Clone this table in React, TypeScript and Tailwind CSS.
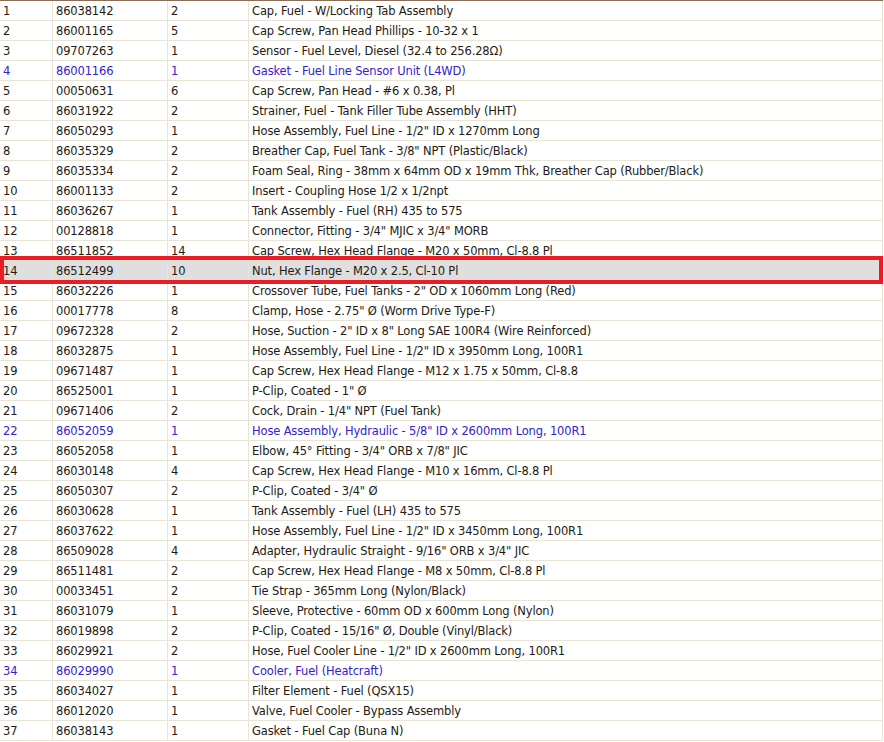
import React from "react";

type Row = [string, string, string, string, boolean?];

const rows: Row[] = [
  ["1", "86038142", "2", "Cap, Fuel - W/Locking Tab Assembly"],
  ["2", "86001165", "5", "Cap Screw, Pan Head Phillips - 10-32 x 1"],
  ["3", "09707263", "1", "Sensor - Fuel Level, Diesel (32.4 to 256.28Ω)"],
  ["4", "86001166", "1", "Gasket - Fuel Line Sensor Unit (L4WD)", true],
  ["5", "00050631", "6", "Cap Screw, Pan Head - #6 x 0.38, Pl"],
  ["6", "86031922", "2", "Strainer, Fuel - Tank Filler Tube Assembly (HHT)"],
  ["7", "86050293", "1", "Hose Assembly, Fuel Line - 1/2\" ID x 1270mm Long"],
  ["8", "86035329", "2", "Breather Cap, Fuel Tank - 3/8\" NPT (Plastic/Black)"],
  ["9", "86035334", "2", "Foam Seal, Ring - 38mm x 64mm OD x 19mm Thk, Breather Cap (Rubber/Black)"],
  ["10", "86001133", "2", "Insert - Coupling Hose 1/2 x 1/2npt"],
  ["11", "86036267", "1", "Tank Assembly - Fuel (RH) 435 to 575"],
  ["12", "00128818", "1", "Connector, Fitting - 3/4\" MJIC x 3/4\" MORB"],
  ["13", "86511852", "14", "Cap Screw, Hex Head Flange - M20 x 50mm, Cl-8.8 Pl"],
  ["14", "86512499", "10", "Nut, Hex Flange - M20 x 2.5, Cl-10 Pl"],
  ["15", "86032226", "1", "Crossover Tube, Fuel Tanks - 2\" OD x 1060mm Long (Red)"],
  ["16", "00017778", "8", "Clamp, Hose - 2.75\" Ø (Worm Drive Type-F)"],
  ["17", "09672328", "2", "Hose, Suction - 2\" ID x 8\" Long SAE 100R4 (Wire Reinforced)"],
  ["18", "86032875", "1", "Hose Assembly, Fuel Line - 1/2\" ID x 3950mm Long, 100R1"],
  ["19", "09671487", "1", "Cap Screw, Hex Head Flange - M12 x 1.75 x 50mm, Cl-8.8"],
  ["20", "86525001", "1", "P-Clip, Coated - 1\" Ø"],
  ["21", "09671406", "2", "Cock, Drain - 1/4\" NPT (Fuel Tank)"],
  ["22", "86052059", "1", "Hose Assembly, Hydraulic - 5/8\" ID x 2600mm Long, 100R1", true],
  ["23", "86052058", "1", "Elbow, 45° Fitting - 3/4\" ORB x 7/8\" JIC"],
  ["24", "86030148", "4", "Cap Screw, Hex Head Flange - M10 x 16mm, Cl-8.8 Pl"],
  ["25", "86050307", "2", "P-Clip, Coated - 3/4\" Ø"],
  ["26", "86030628", "1", "Tank Assembly - Fuel (LH) 435 to 575"],
  ["27", "86037622", "1", "Hose Assembly, Fuel Line - 1/2\" ID x 3450mm Long, 100R1"],
  ["28", "86509028", "4", "Adapter, Hydraulic Straight - 9/16\" ORB x 3/4\" JIC"],
  ["29", "86511481", "2", "Cap Screw, Hex Head Flange - M8 x 50mm, Cl-8.8 Pl"],
  ["30", "00033451", "2", "Tie Strap - 365mm Long (Nylon/Black)"],
  ["31", "86031079", "1", "Sleeve, Protective - 60mm OD x 600mm Long (Nylon)"],
  ["32", "86019898", "2", "P-Clip, Coated - 15/16\" Ø, Double (Vinyl/Black)"],
  ["33", "86029921", "2", "Hose, Fuel Cooler Line - 1/2\" ID x 2600mm Long, 100R1"],
  ["34", "86029990", "1", "Cooler, Fuel (Heatcraft)", true],
  ["35", "86034027", "1", "Filter Element - Fuel (QSX15)"],
  ["36", "86012020", "1", "Valve, Fuel Cooler - Bypass Assembly"],
  ["37", "86038143", "1", "Gasket - Fuel Cap (Buna N)"],
];

export default function App() {
  return (
    <div
      className="relative w-[884px] h-[742px] bg-white overflow-hidden"
      style={{ fontFamily: '"DejaVu Sans", Verdana, sans-serif' }}
    >
      <div className="w-[883px] border-t border-[#8c6e58]">
        {rows.map(([n, part, qty, desc, blue]) => {
          const hl = n === "14";
          return (
            <div
              key={n}
              className={`grid grid-cols-[53px_115px_81px_634px] h-[20px] border-b border-[#e9e5d6] text-[11.5px] leading-[19px] tracking-[-0.15px] ${
                blue ? "text-[#3322cc]" : "text-[#241a12]"
              } ${hl ? "bg-[#dfdfdf]" : "bg-white"}`}
            >
              <div className="pl-[3px] pt-[1px] border-r border-[#e9e5d6] whitespace-nowrap overflow-hidden">{n}</div>
              <div className="pl-[3px] pt-[1px] border-r border-[#e9e5d6] whitespace-nowrap overflow-hidden">{part}</div>
              <div className="pl-[3px] pt-[1px] border-r border-[#e9e5d6] whitespace-nowrap overflow-hidden">{qty}</div>
              <div className="pl-[3px] pt-[1px] border-r border-[#e9e5d6] whitespace-nowrap overflow-hidden">{desc}</div>
            </div>
          );
        })}
      </div>
      <div className="absolute left-0 top-[256px] w-[883px] h-[28px] border-[4px] border-[#ed1c24]" />
    </div>
  );
}
